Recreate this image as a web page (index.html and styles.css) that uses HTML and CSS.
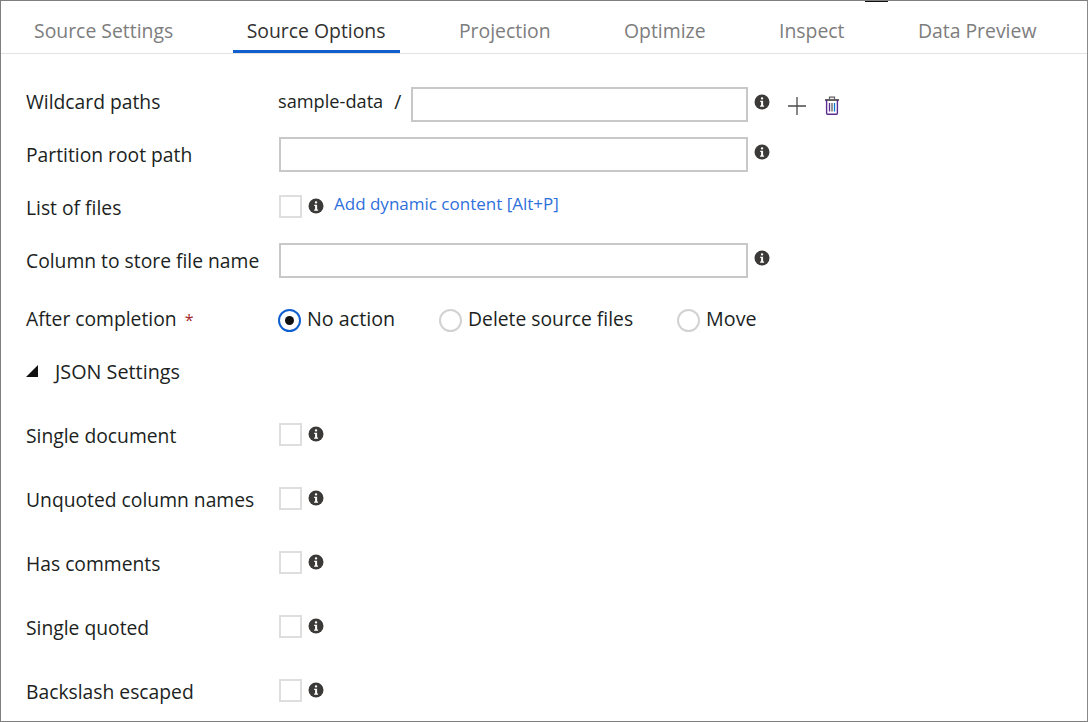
FILE: index.html
```html
<!DOCTYPE html>
<html>
<head>
<title>Source Options</title>
<meta charset="utf-8">
<link rel="stylesheet" href="styles.css">
</head>
<body>
<svg width="0" height="0" class="defs">
	<symbol id="info" viewBox="0 0 16 16">
		<circle cx="8" cy="8" r="7.5" fill="#3b3a39"/>
		<rect x="6.9" y="3.2" width="2.3" height="2.3" rx="1" fill="#fff"/>
		<path d="M6.2 6.8h2.9v4.6h1v1.3H6.1v-1.3h1v-3.3h-.9z" fill="#fff"/>
	</symbol>
</svg>
<div class="frame">
	<span class="topmark"></span>
	<ul class="tabs">
		<li>Source Settings</li>
		<li class="active">Source Options</li>
		<li>Projection</li>
		<li>Optimize</li>
		<li>Inspect</li>
		<li>Data Preview</li>
	</ul>

	<div class="form">
		<div class="row">
			<label>Wildcard paths</label>
			<div class="ctl low">
				<span class="prefix">sample-data</span>
				<span class="slash">/</span>
				<input class="text short" type="text">
				<svg class="info up"><use href="#info"/></svg>
				<svg class="plus" width="18" height="18" viewBox="0 0 18 18"><path d="M9 0v18M0 9h18" stroke="#4a4a4a" stroke-width="1.3" fill="none"/></svg>
				<svg class="trash" width="16" height="19" viewBox="0 0 16 19">
					<path d="M1 4h14" stroke="#201f1e" stroke-width="1.4"/>
					<path d="M5.5 3.5V1.2h5v2.3" stroke="#605e5c" stroke-width="1.2" fill="none"/>
					<path d="M2.6 4v13.2q0 1 1 1h8.800q1 0 1-1V4" stroke="#5c2d91" stroke-width="1.400" fill="none"/>
					<path d="M5.500 7v8.500" stroke="#5c2d91" stroke-width="1.300"/>
					<path d="M8 7v8.500" stroke="#605e5c" stroke-width="1.300"/>
					<path d="M10.500 7v8.500" stroke="#0078d4" stroke-width="1.300"/>
				</svg>
			</div>
		</div>
		<div class="row">
			<label>Partition root path</label>
			<div class="ctl">
				<input class="text" type="text">
				<svg class="info up"><use href="#info"/></svg>
			</div>
		</div>
		<div class="row">
			<label>List of files</label>
			<div class="ctl">
				<span class="check"></span>
				<svg class="info tight"><use href="#info"/></svg>
				<a class="link" href="#">Add dynamic content [Alt+P]</a>
			</div>
		</div>
		<div class="row">
			<label>Column to store file name</label>
			<div class="ctl">
				<input class="text" type="text">
				<svg class="info up"><use href="#info"/></svg>
			</div>
		</div>
		<div class="row after">
			<label>After completion <span class="req">*</span></label>
			<div class="ctl radios">
				<span class="radio on"></span><span class="rlabel first">No action</span>
				<span class="radio"></span><span class="rlabel second">Delete source files</span>
				<span class="radio"></span><span class="rlabel">Move</span>
			</div>
		</div>
		<div class="row section">
			<span class="arrow"></span>JSON Settings
		</div>
		<div class="json-list">
			<div class="row json">
				<label>Single document</label>
				<div class="ctl"><span class="check"></span><svg class="info tight"><use href="#info"/></svg></div>
			</div>
			<div class="row json">
				<label>Unquoted column names</label>
				<div class="ctl"><span class="check"></span><svg class="info tight"><use href="#info"/></svg></div>
			</div>
			<div class="row json">
				<label>Has comments</label>
				<div class="ctl"><span class="check"></span><svg class="info tight"><use href="#info"/></svg></div>
			</div>
			<div class="row json">
				<label>Single quoted</label>
				<div class="ctl"><span class="check"></span><svg class="info tight"><use href="#info"/></svg></div>
			</div>
			<div class="row json">
				<label>Backslash escaped</label>
				<div class="ctl"><span class="check"></span><svg class="info tight"><use href="#info"/></svg></div>
			</div>
		</div>
	</div>
</div>
</body>
</html>
```

FILE: styles.css
```css
html, body {
	margin: 0;
	padding: 0;
	background: #fff;
}

body {
	font-family: "Open Sans", "Noto Sans", sans-serif;
	font-size: 19.3px;
	color: #201f1e;
	overflow: hidden;
}

.defs {
	position: absolute;
}

.frame {
	position: relative;
	box-sizing: border-box;
	width: 1088px;
	height: 722px;
	border: 1px solid #7f7f7f;
	border-right-color: #8a8a8a;
	overflow: hidden;
}

.topmark {
	position: absolute;
	top: -1px;
	left: 864px;
	width: 23px;
	height: 2px;
	background: #111;
}

.tabs {
	display: flex;
	gap: 45.4px;
	list-style: none;
	margin: 0;
	padding: 0 0 0 19px;
	height: 52px;
	border-bottom: 1px solid #e3e3e3;
	color: #7d7d7d;
	font-size: 19.4px;
}

.tabs li {
	box-sizing: border-box;
	height: 52px;
	padding: 13px 14px 0;
	line-height: 34px;
	white-space: nowrap;
}

.tabs li.active {
	color: #323130;
	border-bottom: 3px solid #0f5fcf;
}

.form {
	padding: 21px 0 0 25px;
}

.row {
	display: flex;
	align-items: center;
	height: 53px;
}

.row label {
	width: 253px;
	flex: none;
	white-space: nowrap;
}

.ctl {
	display: flex;
	align-items: center;
}

.low {
	padding-top: 6px;
}

.prefix {
	margin: -7px 0 0 -1px;
	font-size: 18.2px;
}

.slash {
	margin: -7px 10px 0 11px;
}

.text {
	box-sizing: border-box;
	width: 469px;
	height: 35px;
	margin: 0;
	padding: 0 8px;
	border: 2px solid #c8c8c8;
	background: #fff;
	font: inherit;
}

.text.short {
	width: 337px;
}

.info {
	width: 16px;
	height: 16px;
	flex: none;
	margin-left: 6px;
}

.info.up {
	margin-top: -5px;
}

.info.tight {
	margin-left: 6px;
	margin-top: -4px;
}

.plus {
	margin: 2px 0 0 18px;
}

.trash {
	margin: 2px 0 0 18px;
}

.check {
	box-sizing: border-box;
	display: block;
	width: 23px;
	height: 23px;
	margin-top: -3px;
	border: 2px solid #dedede;
	background: #fff;
}

.link {
	margin: -9px 0 0 10px;
	color: #2f6fdb;
	text-decoration: none;
	font-size: 17px;
}

.req {
	color: #a4262c;
	margin-left: 3px;
	font-size: 16px;
}

.after {
	margin-top: 5px;
}

.radios {
	margin-left: -1px;
}

.radio {
	box-sizing: border-box;
	display: block;
	position: relative;
	width: 23px;
	height: 23px;
	margin-top: 3px;
	border: 2px solid #d2d2d2;
	border-radius: 50%;
}

.radio.on {
	border-color: #0f5fcf;
}

.radio.on::after {
	content: "";
	position: absolute;
	top: 5px;
	left: 5px;
	width: 9px;
	height: 9px;
	border-radius: 50%;
	background: #111;
}

.rlabel {
	margin-left: 6px;
	font-size: 19.7px;
}

.rlabel.first,
.rlabel.second {
	margin-right: 44px;
}

.rlabel.second {
	font-size: 19.3px;
}

.section {
	position: relative;
	padding-left: 29px;
	font-size: 19.8px;
}

.arrow {
	position: absolute;
	left: 0;
	top: 20px;
	width: 0;
	height: 0;
	border-style: solid;
	border-width: 0 0 12px 12px;
	border-color: transparent transparent #111 transparent;
}

.json-list {
	padding-top: 6px;
}

.json {
	height: 64px;
}

.json label {
	margin-top: -2px;
}
```
